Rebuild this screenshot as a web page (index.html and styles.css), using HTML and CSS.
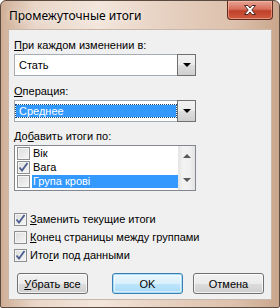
FILE: index.html
```html
<!DOCTYPE html>
<html lang="ru">
<head>
    <meta charset="UTF-8">
    <title>Промежуточные итоги</title>
    <link rel="stylesheet" href="styles.css">
</head>
<body>
    <div class="window">
        <div class="titlebar">
            <span class="title">Промежуточные итоги</span>
            <span class="close">
                <svg width="14" height="12" viewBox="0 0 14 12">
                    <path d="M1.5 1.5h3.5l2 2.5 2-2.5h3.5l-3.7 4.5 3.7 4.5h-3.5l-2-2.5-2 2.5h-3.5l3.7-4.5z" fill="#fff" stroke="#4b2a24" stroke-width="1" stroke-linejoin="round"/>
                </svg>
            </span>
        </div>

        <div class="client">
            <div class="label"><u>П</u>ри каждом изменении в:</div>
            <div class="combo">
                <span class="combo-value">Стать</span>
                <span class="combo-btn"><span class="tri"></span></span>
            </div>

            <div class="label label-gap"><u>О</u>перация:</div>
            <div class="combo">
                <span class="combo-value"><span class="selected">Среднее</span></span>
                <span class="combo-btn"><span class="tri"></span></span>
            </div>

            <div class="label label-gap-list">До<u>б</u>авить итоги по:</div>
            <div class="listbox">
                <div class="list-items">
                    <div class="list-row"><span class="check"></span><span class="row-text">Вік</span></div>
                    <div class="list-row"><span class="check checked"><svg width="11" height="11" viewBox="0 0 11 11"><path d="M1.5 5.5l2.5 3 5.5-7.5" fill="none" stroke="#4a5c8c" stroke-width="1.8"/></svg></span><span class="row-text">Вага</span></div>
                    <div class="list-row"><span class="check"></span><span class="row-text active">Група крові</span></div>
                </div>
                <div class="scrollbar">
                    <span class="arrow-up"></span>
                    <span class="arrow-down"></span>
                </div>
            </div>

            <div class="options">
                <div class="option"><span class="check checked"><svg width="11" height="11" viewBox="0 0 11 11"><path d="M1.5 5.5l2.5 3 5.5-7.5" fill="none" stroke="#4a5c8c" stroke-width="1.8"/></svg></span><span><u>З</u>аменить текущие итоги</span></div>
                <div class="option"><span class="check"></span><span><u>К</u>онец страницы между группами</span></div>
                <div class="option"><span class="check checked"><svg width="11" height="11" viewBox="0 0 11 11"><path d="M1.5 5.5l2.5 3 5.5-7.5" fill="none" stroke="#4a5c8c" stroke-width="1.8"/></svg></span><span>Ито<u>г</u>и под данными</span></div>
            </div>

            <div class="buttons">
                <span class="btn"><u>У</u>брать все</span>
                <span class="btn btn-default btn-ok">OK</span>
                <span class="btn btn-cancel">Отмена</span>
            </div>
        </div>
    </div>
</body>
</html>
```

FILE: styles.css
```css
body {
    margin: 0;
    font-family: "Liberation Sans", Arial, sans-serif;
    font-size: 11px;
    color: #000;
    background: #fff;
}

u {
    text-decoration: underline;
    text-underline-offset: 1px;
}

.window {
    width: 280px;
    height: 308px;
    box-sizing: border-box;
    border: 1px solid #5b4a40;
    border-radius: 6px 6px 2px 2px;
    padding: 0 7px 7px;
    display: flex;
    flex-direction: column;
    background: linear-gradient(90deg, #cfae95 0%, #e9d6c9 12%, #f3e6dc 35%, #e6d0c0 60%, #dcc0ab 85%, #c9a68c 100%);
}

.titlebar {
    height: 28px;
    display: flex;
    justify-content: space-between;
    align-items: flex-start;
}

.title {
    margin: 8px 0 0 1px;
    font-family: "Noto Sans", sans-serif;
    font-size: 12px;
    line-height: 14px;
    color: #000;
    text-shadow: 0 0 6px rgba(255, 255, 255, 0.9);
}

.close {
    width: 46px;
    height: 19px;
    margin-right: -1px;
    box-sizing: border-box;
    border: 1px solid #5f2b22;
    border-top: none;
    border-radius: 0 0 4px 4px;
    display: flex;
    align-items: center;
    justify-content: center;
    background: linear-gradient(#e8a493 0%, #d6705c 45%, #c0402a 55%, #cf5c3f 100%);
    box-shadow: inset 0 0 0 1px rgba(255, 200, 180, 0.5);
}

.client {
    flex: 1;
    border: 1px solid #c9b7aa;
    background: #f0f0f0;
    padding: 8px 7px 0 5px;
    display: flex;
    flex-direction: column;
}

.label {
    line-height: 15px;
    height: 15px;
    margin-bottom: 1px;
}

.label-gap {
    margin-top: 8px;
}

.label-gap-list {
    margin-top: 7px;
}

.combo {
    width: 182px;
    height: 22px;
    box-sizing: border-box;
    border: 1px solid #a5acb5;
    background: #fff;
    display: flex;
}

.combo-value {
    flex: 1;
    padding: 3px 1px 3px 2px;
    display: flex;
    line-height: 14px;
}

.combo-value:first-child {
    padding-left: 4px;
    align-items: center;
}

.selected {
    flex: 1;
    margin-left: -3px;
    padding: 0 3px;
    line-height: 12px;
    background: #3399ff;
    color: #fff;
    outline: 1px dotted #1a4d80;
}

.combo-btn {
    width: 17px;
    border: 1px solid #707070;
    margin: -1px -1px -1px 0;
    display: flex;
    align-items: center;
    justify-content: center;
    background: linear-gradient(#f2f2f2 0%, #ebebeb 50%, #dddddd 51%, #cfcfcf 100%);
}

.tri {
    width: 0;
    height: 0;
    border-left: 4px solid transparent;
    border-right: 4px solid transparent;
    border-top: 4px solid #000;
}

.listbox {
    width: 182px;
    height: 46px;
    box-sizing: border-box;
    border: 1px solid #828790;
    background: #fff;
    display: flex;
}

.list-items {
    flex: 1;
    padding: 0 0 0 1px;
}

.list-row {
    height: 14px;
    display: flex;
    align-items: center;
}

.list-row .check {
    margin: 0 2px 0 1px;
}

.row-text {
    flex: 1;
    height: 13px;
    line-height: 13px;
    padding-left: 1px;
}

.active {
    background: #3399ff;
    color: #fff;
}

.scrollbar {
    width: 17px;
    background: linear-gradient(90deg, #e3e3e3, #f3f3f3 30%, #f0f0f0 70%, #e3e3e3);
    display: flex;
    flex-direction: column;
    justify-content: space-between;
    align-items: center;
    padding: 8px 0;
    box-sizing: border-box;
}

.arrow-up,
.arrow-down {
    width: 0;
    height: 0;
    border-left: 4px solid transparent;
    border-right: 4px solid transparent;
}

.arrow-up {
    border-bottom: 4px solid #5a5a5a;
}

.arrow-down {
    border-top: 4px solid #5a5a5a;
}

.check {
    width: 13px;
    height: 13px;
    box-sizing: border-box;
    border: 1px solid #8e8f8f;
    background: linear-gradient(135deg, #dcdcdc, #f6f6f6);
    box-shadow: inset 0 0 0 1px #f4f4f4;
    display: flex;
    align-items: center;
    justify-content: center;
    flex-shrink: 0;
}

.options {
    margin-top: 22px;
    display: flex;
    flex-direction: column;
    gap: 5px;
}

.option {
    height: 13px;
    display: flex;
    align-items: center;
    gap: 3px;
    line-height: 15px;
}

.buttons {
    margin-top: 11px;
    display: flex;
    padding-left: 3px;
}

.btn {
    width: 71px;
    height: 21px;
    box-sizing: border-box;
    border: 1px solid #707070;
    border-radius: 3px;
    background: linear-gradient(#f2f2f2 0%, #ebebeb 50%, #dddddd 51%, #cfcfcf 100%);
    box-shadow: inset 0 0 0 1px rgba(255, 255, 255, 0.7);
    display: flex;
    align-items: center;
    justify-content: center;
}

.btn-ok {
    margin-left: 24px;
}

.btn-cancel {
    margin-left: 10px;
}

.btn-default {
    border-color: #3c7fb1;
    box-shadow: inset 0 0 0 1px #a8dcf7, inset 0 0 0 2px rgba(255, 255, 255, 0.5);
    background: linear-gradient(#eaf6fd 0%, #d9f0fc 50%, #bee6fd 51%, #a7d9f5 100%);
}
```
